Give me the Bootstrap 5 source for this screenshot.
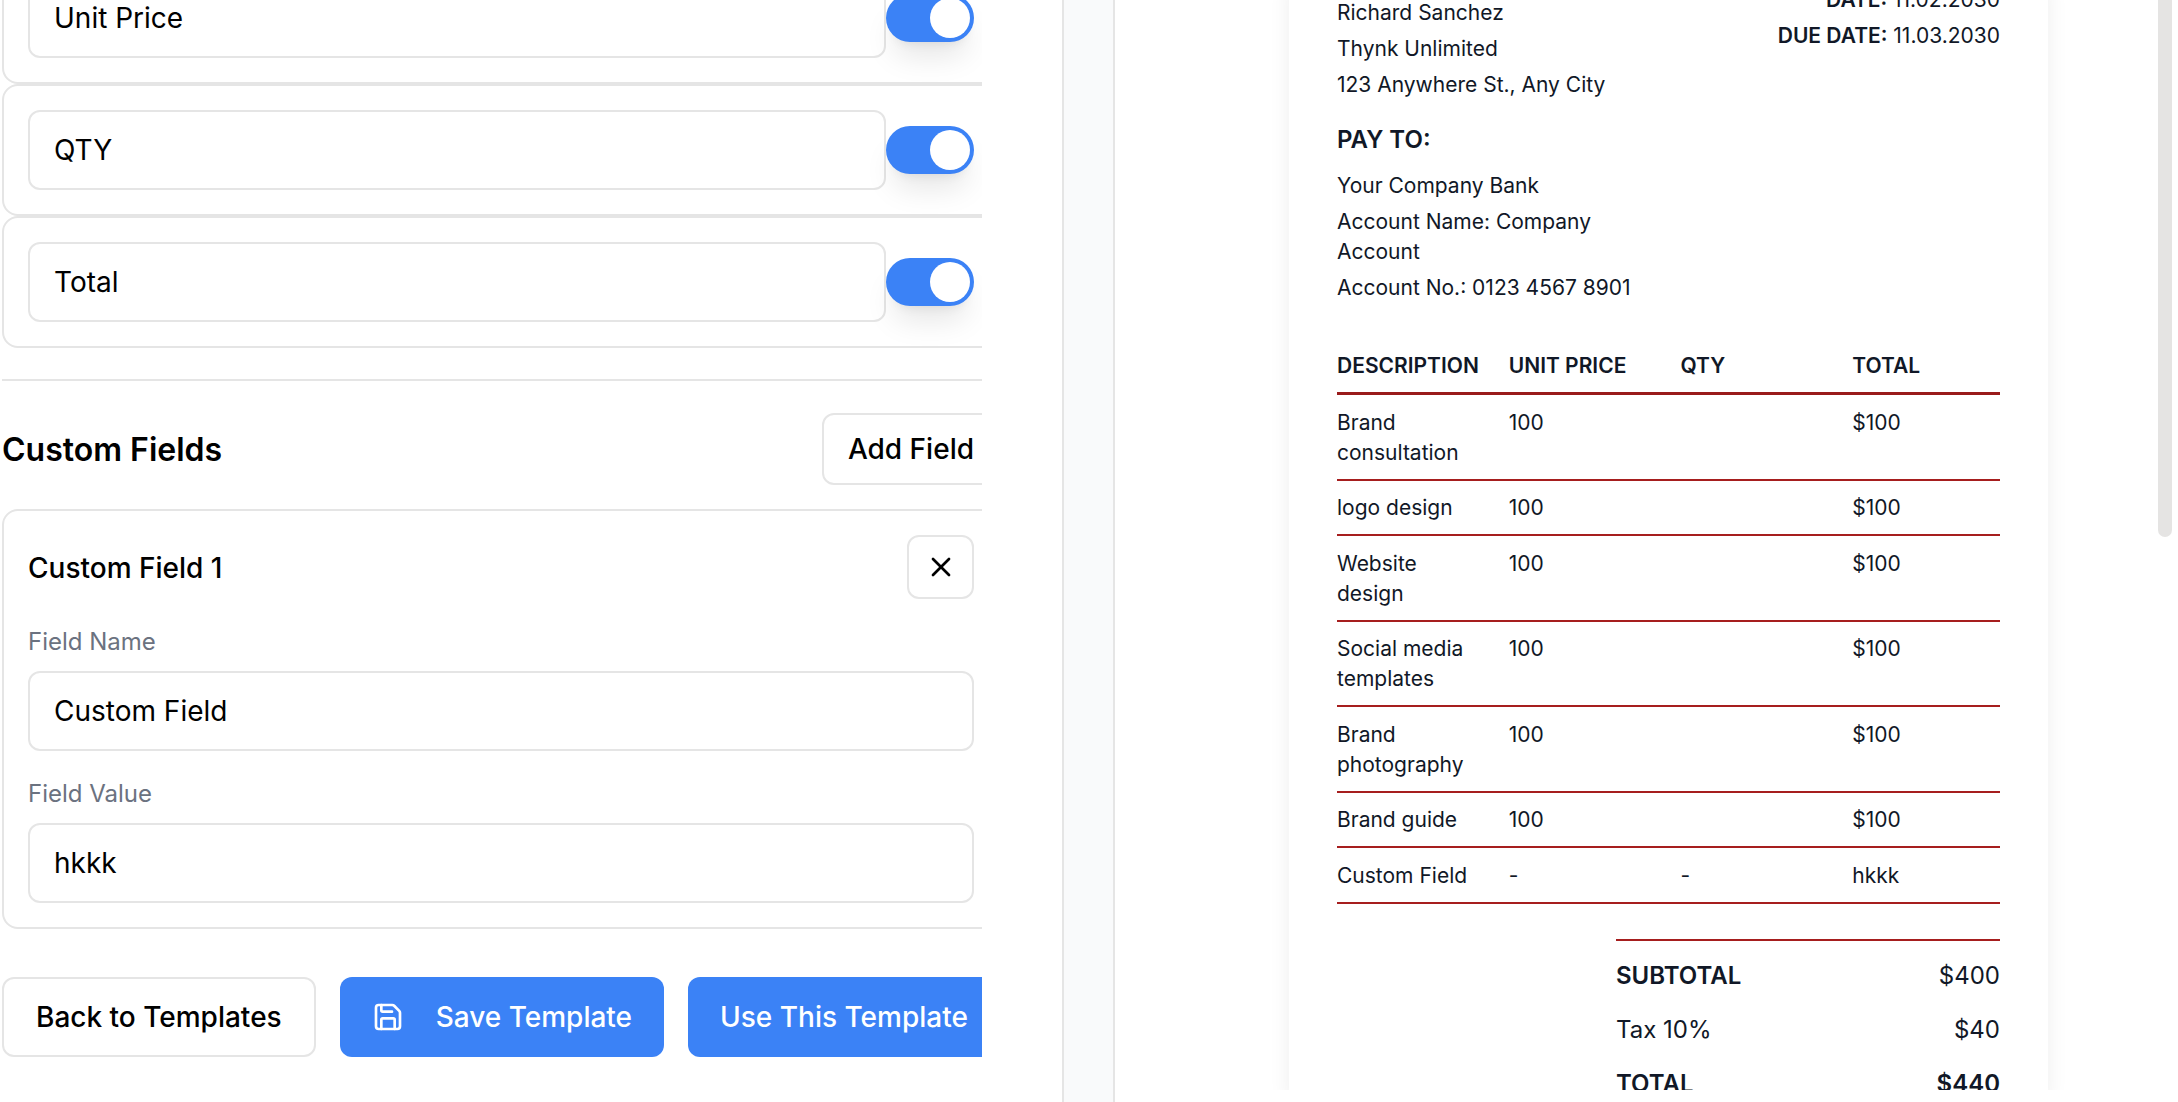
<!DOCTYPE html>
<html lang="en">
<head>
    <meta charset="utf-8">
    <title>Template Editor</title>
    <link href="https://cdn.jsdelivr.net/npm/bootstrap@5.3.3/dist/css/bootstrap.min.css" rel="stylesheet">
    <style>
        html, body { height: 100%; overflow: hidden; }
        body { font-family: "Inter", "Liberation Sans", sans-serif; background: #fff; color: #000; }

        /* layout */
        .page-wrap { height: 1102px; }
        .editor-side { width: 1064px; flex: none; border-right: 2px solid #e5e5e5; background: #fff; }
        .editor-clip { width: 982px; height: 100%; overflow: hidden; }
        .editor-inner { width: 1000px; padding-left: 2px; margin-top: -48px; }
        .gutter { width: 49px; flex: none; background: #f9fafb; }
        .preview-side { flex: 1; min-width: 0; border-left: 2px solid #e5e5e5; background: #fff; position: relative; }
        .preview-clip { height: 1090px; overflow: hidden; padding-left: 174px; }

        /* fake scrollbar thumb */
        .scroll-thumb { position: absolute; top: -20px; right: 6px; width: 14px; height: 557px; border-radius: 7px; background: #e5e4e3; }

        /* editor */
        .column-box { border: 2px solid #e5e5e5; border-radius: 16px; padding: 24px; }
        .field-input.form-control { height: 80px; font-size: 28px; padding: 0 24px; color: #000; border: 2px solid #e5e5e5; border-radius: 12px; box-shadow: none; }
        .toggle-pill { width: 88px; height: 48px; flex: none; padding: 4px; border-radius: 24px; background: #3b82f6; box-shadow: 0 20px 30px -6px rgba(0,0,0,.1), 0 8px 12px -8px rgba(0,0,0,.1); }
        .toggle-knob { width: 40px; height: 40px; border-radius: 50%; background: #fff; }
        .section-rule { height: 2px; margin: 31px 0 32px; background: #e5e5e5; }
        .section-title { font-size: 32px; font-weight: 600; line-height: 40px; padding-top: 1px; }
        .plain-btn.btn { height: 72px; font-size: 28px; padding: 0 24px; color: #000; background: #fff; border: 2px solid #e5e5e5; border-radius: 12px; font-weight: 500; }
        .field-title { font-size: 28px; font-weight: 500; line-height: 40px; padding-top: 1px; }
        .icon-btn.btn { width: 67px; height: 64px; padding: 0; background: #fff; border: 2px solid #e5e5e5; border-radius: 12px; }
        .field-label { font-size: 24px; line-height: 36px; color: #6b7280; margin: 25px 0 11px; display: block; }
        .action-row { margin-top: 48px; }
        .action-btn.btn { height: 80px; font-size: 28px; font-weight: 500; padding: 0 32px; border-radius: 12px; white-space: nowrap; flex: none; }
        .action-light.btn { background: #fff; color: #000; border: 2px solid #e5e5e5; }
        .action-blue.btn { background: #3b82f6; color: #fff; border: 0; }
        .save-text { margin-left: 32px; }

        /* invoice */
        .invoice-sheet { width: 759px; padding: 0 48px; background: #fff; color: #111827; box-shadow: 0 0 20px rgba(0,0,0,.07); font-size: 21px; line-height: 30px; }
        .invoice-sheet p { margin: 0 0 6px; }
        .invoice-head { margin-top: -15px; }
        .billing-col { width: 320px; padding-top: 13px; }
        .pay-title { font-size: 24px; font-weight: 600; line-height: 36px; margin: 22px 0 13px; }
        .line-grid { display: grid; grid-template-columns: repeat(4, 1fr); column-gap: 24px; }
        .line-head { margin-top: 48px; font-weight: 600; padding-bottom: 11px; border-bottom: 3px solid #991b1b; }
        .line-row { padding: 12.5px 0 11px; border-bottom: 2px solid #a61e1e; }
        .totals-box { width: 384px; margin: 35px 0 0 auto; padding-top: 17px; border-top: 2px solid #a61e1e; font-size: 24px; line-height: 36px; }
        .totals-row { margin-bottom: 18px; }
    </style>
</head>
<body>

<div class="page-wrap d-flex">
    <div class="editor-side">
        <div class="editor-clip">
            <div class="editor-inner">

                <div class="column-box d-flex align-items-center">
                    <input type="text" class="form-control field-input" value="Unit Price">
                    <div class="toggle-pill d-flex justify-content-end"><div class="toggle-knob"></div></div>
                </div>
                <div class="column-box d-flex align-items-center">
                    <input type="text" class="form-control field-input" value="QTY">
                    <div class="toggle-pill d-flex justify-content-end"><div class="toggle-knob"></div></div>
                </div>
                <div class="column-box d-flex align-items-center">
                    <input type="text" class="form-control field-input" value="Total">
                    <div class="toggle-pill d-flex justify-content-end"><div class="toggle-knob"></div></div>
                </div>

                <div class="section-rule"></div>

                <div class="d-flex justify-content-between align-items-center mb-4">
                    <div class="section-title">Custom Fields</div>
                    <button type="button" class="btn plain-btn">Add Field</button>
                </div>

                <div class="column-box">
                    <div class="d-flex justify-content-between align-items-center">
                        <div class="field-title">Custom Field 1</div>
                        <button type="button" class="btn icon-btn d-flex align-items-center justify-content-center" aria-label="Remove">
                            <svg width="32" height="32" viewBox="0 0 24 24" fill="none" stroke="#000" stroke-width="2" stroke-linecap="round" stroke-linejoin="round"><path d="M18 6 6 18"/><path d="m6 6 12 12"/></svg>
                        </button>
                    </div>
                    <label class="field-label">Field Name</label>
                    <input type="text" class="form-control field-input" value="Custom Field">
                    <label class="field-label">Field Value</label>
                    <input type="text" class="form-control field-input" value="hkkk">
                </div>

                <div class="d-flex gap-4 action-row">
                    <button type="button" class="btn action-btn action-light">Back to Templates</button>
                    <button type="button" class="btn action-btn action-blue d-flex align-items-center">
                        <svg width="32" height="32" viewBox="0 0 24 24" fill="none" stroke="#fff" stroke-width="2" stroke-linecap="round" stroke-linejoin="round"><path d="M15.2 3a2 2 0 0 1 1.4.6l3.8 3.8a2 2 0 0 1 .6 1.4V19a2 2 0 0 1-2 2H5a2 2 0 0 1-2-2V5a2 2 0 0 1 2-2z"/><path d="M17 21v-7a1 1 0 0 0-1-1H8a1 1 0 0 0-1 1v7"/><path d="M7 3v4a1 1 0 0 0 1 1h7"/></svg>
                        <span class="save-text">Save Template</span>
                    </button>
                    <button type="button" class="btn action-btn action-blue">Use This Template</button>
                </div>

            </div>
        </div>
    </div>

    <div class="gutter"></div>

    <div class="preview-side">
        <div class="preview-clip">
            <div class="invoice-sheet">
                <div class="invoice-head d-flex justify-content-between">
                    <div class="billing-col">
                        <p>Richard Sanchez</p>
                        <p>Thynk Unlimited</p>
                        <p>123 Anywhere St., Any City</p>
                        <div class="pay-title">PAY TO:</div>
                        <p>Your Company Bank</p>
                        <p>Account Name: Company Account</p>
                        <p class="mb-0">Account No.: 0123 4567 8901</p>
                    </div>
                    <div class="text-end">
                        <p><span class="fw-semibold">DATE:</span> 11.02.2030</p>
                        <p><span class="fw-semibold">DUE DATE:</span> 11.03.2030</p>
                    </div>
                </div>

                <div class="line-grid line-head">
                    <div>DESCRIPTION</div><div>UNIT PRICE</div><div>QTY</div><div>TOTAL</div>
                </div>
                <div class="line-grid line-row"><div>Brand consultation</div><div>100</div><div></div><div>$100</div></div>
                <div class="line-grid line-row"><div>logo design</div><div>100</div><div></div><div>$100</div></div>
                <div class="line-grid line-row"><div>Website design</div><div>100</div><div></div><div>$100</div></div>
                <div class="line-grid line-row"><div>Social media templates</div><div>100</div><div></div><div>$100</div></div>
                <div class="line-grid line-row"><div>Brand photography</div><div>100</div><div></div><div>$100</div></div>
                <div class="line-grid line-row"><div>Brand guide</div><div>100</div><div></div><div>$100</div></div>
                <div class="line-grid line-row"><div>Custom Field</div><div>-</div><div>-</div><div>hkkk</div></div>

                <div class="totals-box">
                    <div class="totals-row d-flex justify-content-between fw-semibold"><span>SUBTOTAL</span><span class="fw-normal">$400</span></div>
                    <div class="totals-row d-flex justify-content-between"><span>Tax 10%</span><span>$40</span></div>
                    <div class="totals-row d-flex justify-content-between fw-semibold"><span>TOTAL</span><span>$440</span></div>
                </div>
            </div>
        </div>
        <div class="scroll-thumb"></div>
    </div>
</div>

<script src="https://cdn.jsdelivr.net/npm/bootstrap@5.3.3/dist/js/bootstrap.bundle.min.js"></script>
</body>
</html>
